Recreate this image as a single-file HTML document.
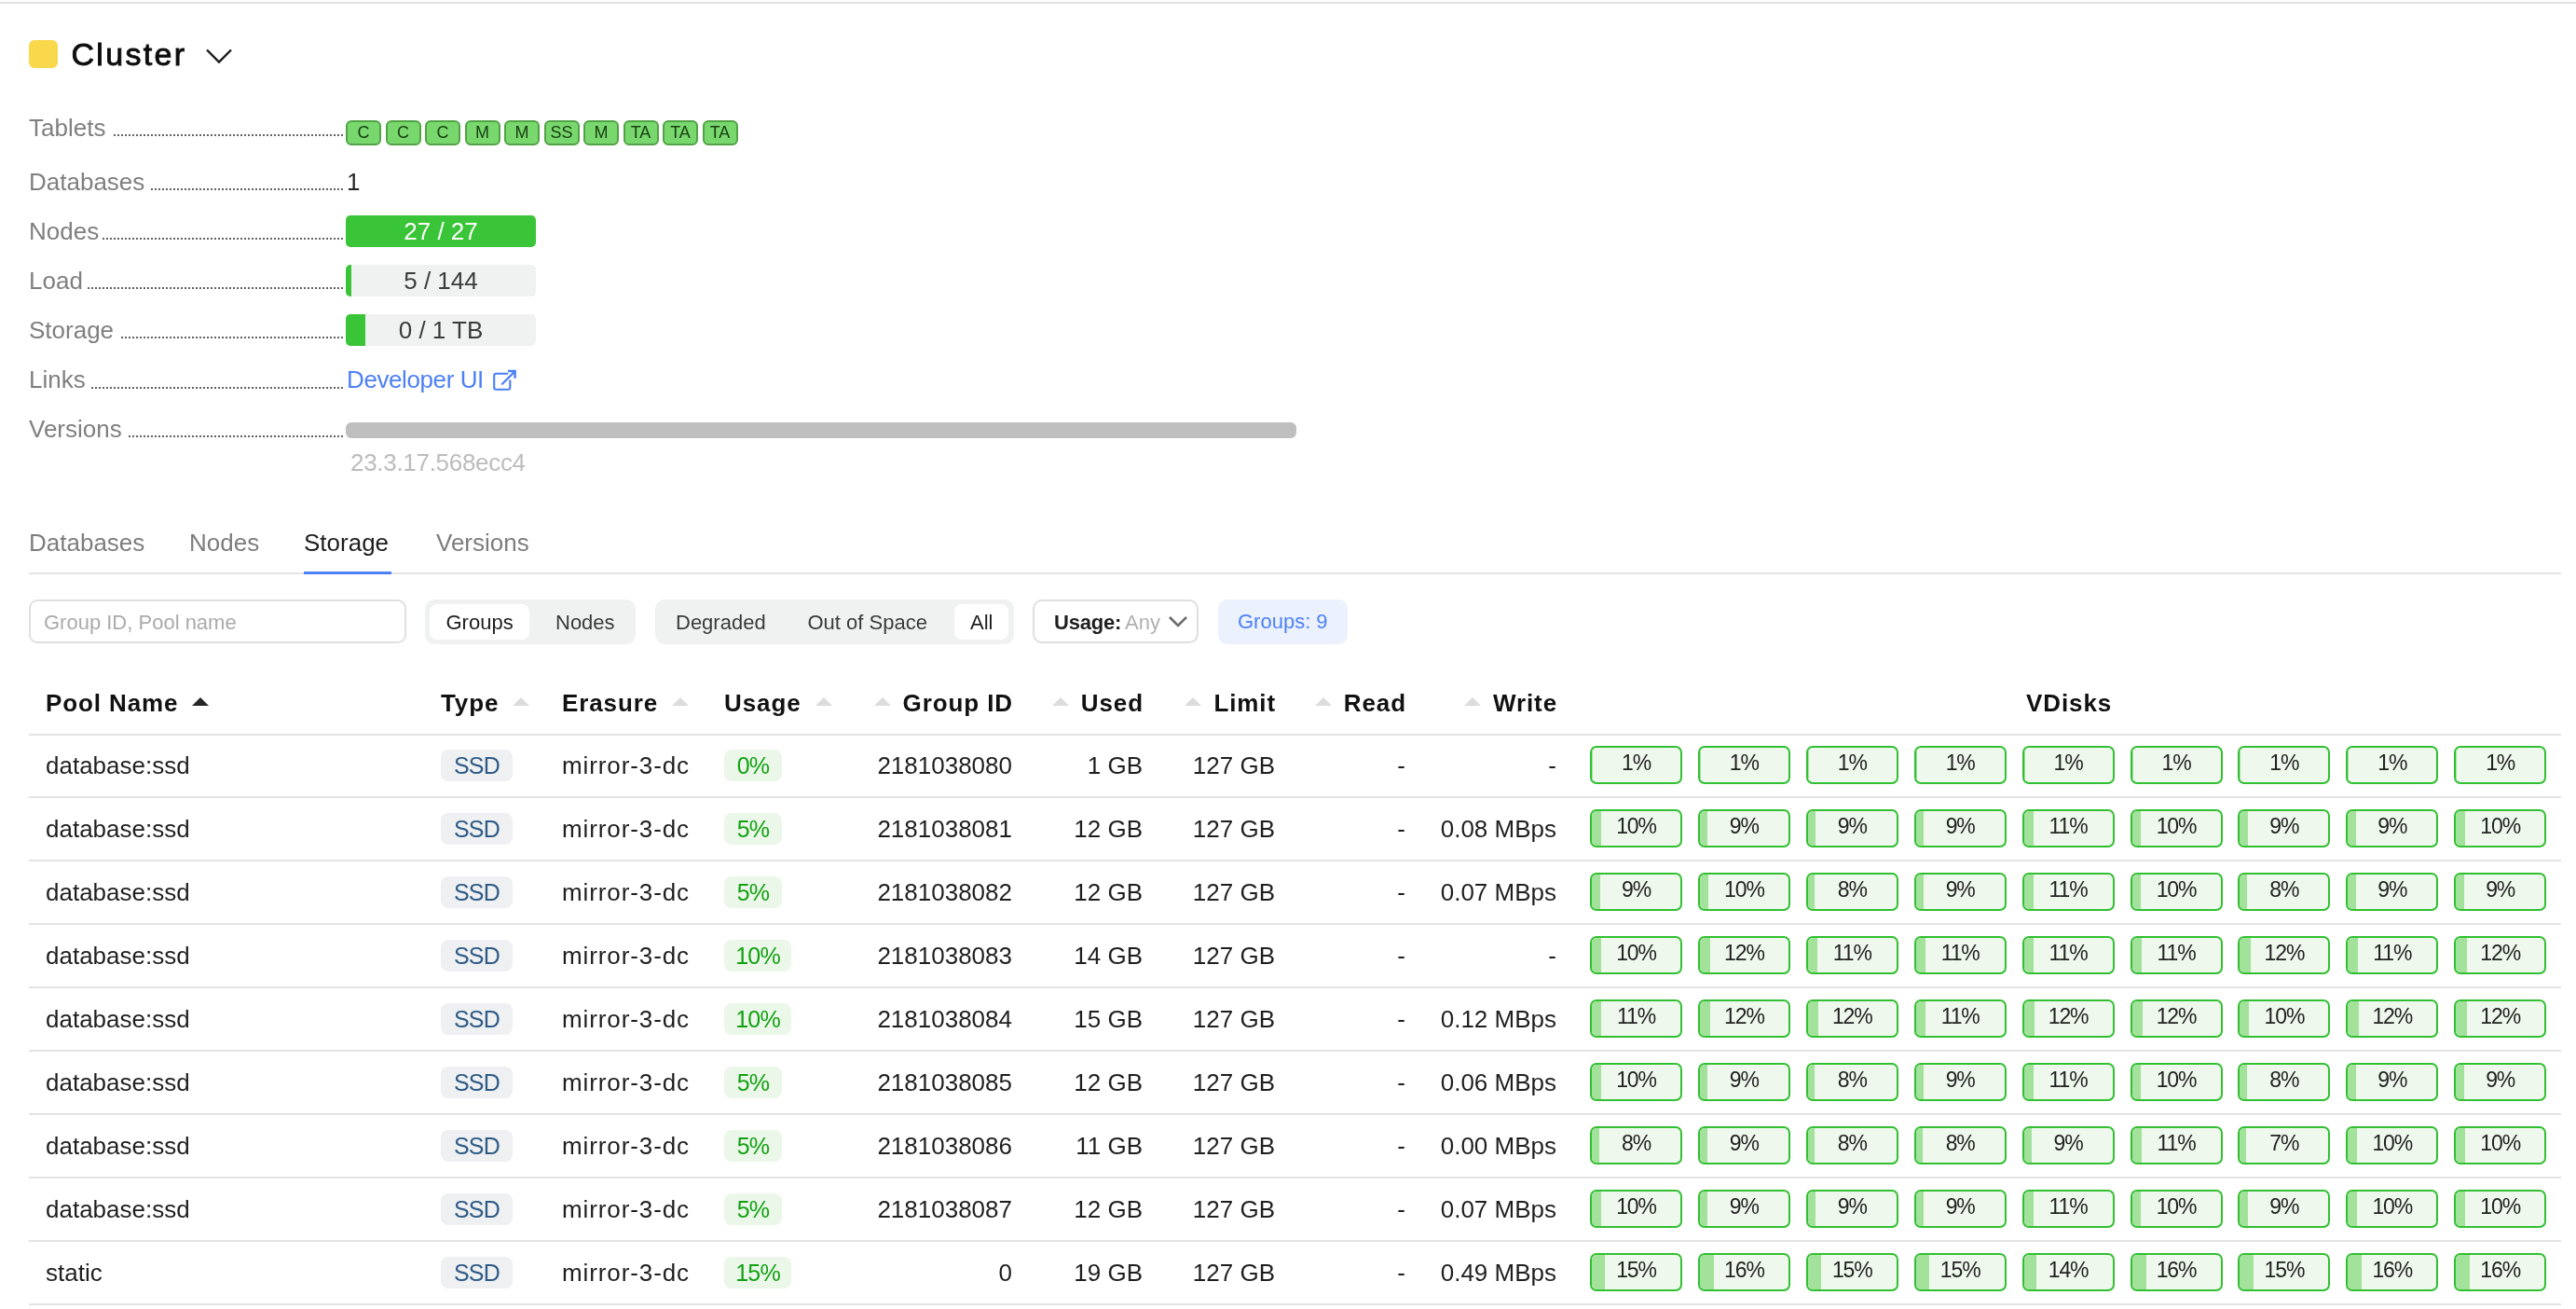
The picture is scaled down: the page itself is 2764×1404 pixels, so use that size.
<!DOCTYPE html>
<html><head><meta charset="utf-8">
<style>
html{background:#fff;}body{margin:0;padding:0;will-change:transform;}
body{width:2764px;height:1404px;position:relative;overflow:hidden;font-family:"Liberation Sans",sans-serif;color:#262626;}
.a{position:absolute;}
.t{position:absolute;white-space:nowrap;line-height:1.117;}
.lbl{font-size:26px;color:#7f7f7f;}
.dots{position:absolute;height:2px;background:repeating-linear-gradient(to left,#636363 0 2px,transparent 2px 4px);}
.tb{position:absolute;top:129px;width:34px;height:23px;border:2px solid #52a246;background:#78d86d;border-radius:6px;font-size:18px;line-height:23px;text-align:center;color:#183d12;}
.bar{position:absolute;left:371px;width:204px;height:34px;border-radius:5px;background:#f0f1f1;overflow:hidden;}
.bar .fill{position:absolute;left:0;top:0;bottom:0;background:#39c537;}
.bar .txt{position:absolute;left:0;right:0;top:0;font-size:26px;line-height:34px;text-align:center;color:#3b3b3b;}
.th{position:absolute;white-space:nowrap;line-height:1.117;font-size:26px;font-weight:bold;letter-spacing:0.9px;color:#111;display:flex;align-items:center;}
.th i{display:block;width:0;height:0;border-left:9px solid transparent;border-right:9px solid transparent;border-bottom:9px solid #dcdcdc;margin-left:15px;margin-top:-3px;}
.th i.l{margin-left:0;margin-right:13px;}
.td{font-size:26px;color:#1f1f1f;}
.hl{left:31px;width:2717px;height:2px;background:#e3e3e3;}
.ssd{position:absolute;width:77px;height:34px;border-radius:8px;background:#eef0f2;color:#2f5b86;font-size:25px;letter-spacing:-0.8px;line-height:34px;text-align:center;}
.use{position:absolute;height:34px;border-radius:8px;background:#ebf8e9;color:#12a012;font-size:25px;letter-spacing:-0.8px;line-height:34px;text-align:center;}
.vd{position:absolute;width:95px;height:37px;border:2px solid #32c032;border-radius:7px;background:#eef8ec;overflow:hidden;}
.vd b{position:absolute;left:0;top:0;bottom:0;background:#a2e29b;}
.vd span{position:absolute;left:0;right:0;top:-2px;line-height:37px;text-align:center;font-size:23px;letter-spacing:-1.1px;color:#222;}
</style></head><body>
<div class="a" style="left:0;top:2px;width:2764px;height:2px;background:#e2e2e2"></div>
<div class="a" style="left:31px;top:43px;width:31px;height:30px;border-radius:6px;background:#f9d84b"></div>
<div class="t" style="left:76.5px;top:40.2px;font-size:34px;letter-spacing:2.3px;-webkit-text-stroke:0.9px #0d0d0d;color:#0d0d0d">Cluster</div>
<svg class="a" style="left:219px;top:50px" width="32" height="20" viewBox="0 0 32 20"><path d="M3 3.5 L16 16.5 L29 3.5" fill="none" stroke="#1a1a1a" stroke-width="2.4"/></svg>

<!-- info rows -->
<div class="t lbl" style="left:31px;top:122.5px">Tablets</div>
<div class="dots" style="left:120px;width:248px;top:144px"></div>
<div class="t lbl" style="left:31px;top:180.5px">Databases</div>
<div class="dots" style="left:161px;width:207px;top:202px"></div>
<div class="t lbl" style="left:31px;top:233.5px">Nodes</div>
<div class="dots" style="left:110px;width:258px;top:255px"></div>
<div class="t lbl" style="left:31px;top:286.5px">Load</div>
<div class="dots" style="left:94px;width:274px;top:308px"></div>
<div class="t lbl" style="left:31px;top:339.5px">Storage</div>
<div class="dots" style="left:128px;width:240px;top:361px"></div>
<div class="t lbl" style="left:31px;top:393px">Links</div>
<div class="dots" style="left:97px;width:271px;top:415px"></div>
<div class="t lbl" style="left:31px;top:445.5px">Versions</div>
<div class="dots" style="left:136px;width:232px;top:467px"></div>

<div class="tb" style="left:371px">C</div>
<div class="tb" style="left:413.5px">C</div>
<div class="tb" style="left:456px">C</div>
<div class="tb" style="left:498.5px">M</div>
<div class="tb" style="left:541px">M</div>
<div class="tb" style="left:583.5px">SS</div>
<div class="tb" style="left:626px">M</div>
<div class="tb" style="left:668.5px">TA</div>
<div class="tb" style="left:711px">TA</div>
<div class="tb" style="left:753.5px">TA</div>

<div class="t" style="left:372px;top:180.5px;font-size:26px;color:#262626">1</div>

<div class="bar" style="top:231px;background:#39c537"><div class="txt" style="color:#fff">27 / 27</div></div>
<div class="bar" style="top:284px"><div class="fill" style="width:6px"></div><div class="txt">5 / 144</div></div>
<div class="bar" style="top:337px"><div class="fill" style="width:21px"></div><div class="txt">0 / 1 TB</div></div>

<div class="t" style="left:372px;top:393px;font-size:26px;color:#4d80f5;letter-spacing:-0.4px">Developer UI</div>
<svg class="a" style="left:520px;top:390px" width="45" height="35" viewBox="0 0 45 35"><path d="M24.4 10.8 H12.2 Q10.2 10.8 10.2 12.8 V25.7 Q10.2 27.7 12.2 27.7 H25.3 Q27.3 27.7 27.3 25.7 V18.2" fill="none" stroke="#4a7ff6" stroke-width="2.1" stroke-linecap="round"/><path d="M18.9 21.8 L32.2 8.6" fill="none" stroke="#4a7ff6" stroke-width="2.2" stroke-linecap="round"/><path d="M26.2 8 H32.6 V14.6" fill="none" stroke="#4a7ff6" stroke-width="2.4" stroke-linecap="square"/></svg>

<div class="a" style="left:371px;top:453px;width:1020px;height:17px;border-radius:6px;background:#bfbfbf"></div>
<div class="t" style="left:376px;top:482px;font-size:26px;color:#bcbcbc;letter-spacing:-0.3px">23.3.17.568ecc4</div>


<!-- tabs -->
<div class="t" style="left:31px;top:567.5px;font-size:26px;color:#7d7d7d">Databases</div>
<div class="t" style="left:203px;top:567.5px;font-size:26px;color:#7d7d7d">Nodes</div>
<div class="t" style="left:326px;top:567.5px;font-size:26px;color:#1d1d1d">Storage</div>
<div class="t" style="left:468px;top:567.5px;font-size:26px;color:#7d7d7d">Versions</div>
<div class="a" style="left:31px;top:614px;width:2717px;height:2px;background:#e4e4e4"></div>
<div class="a" style="left:326px;top:613px;width:94px;height:3px;background:#4f81f6"></div>

<!-- filters -->
<div class="a" style="left:31px;top:643px;width:405px;height:47px;box-sizing:border-box;border:2px solid #e0e0e0;border-radius:9px"></div>
<div class="t" style="left:47px;top:656.1px;font-size:22px;color:#ababab">Group ID, Pool name</div>

<div class="a" style="left:456px;top:643px;width:226px;height:48px;border-radius:10px;background:#f0f2f2"></div>
<div class="a" style="left:461px;top:648px;width:107px;height:38px;border-radius:8px;background:#fff"></div>
<div class="t" style="left:478.5px;top:656.1px;font-size:22px;color:#1e1e1e">Groups</div>
<div class="t" style="left:596px;top:656.1px;font-size:22px;color:#3a3a3a">Nodes</div>

<div class="a" style="left:703px;top:643px;width:385px;height:48px;border-radius:10px;background:#f0f2f2"></div>
<div class="a" style="left:1024px;top:648px;width:58px;height:38px;border-radius:8px;background:#fff"></div>
<div class="t" style="left:725px;top:656.1px;font-size:22px;color:#3a3a3a">Degraded</div>
<div class="t" style="left:866.5px;top:656.1px;font-size:22px;color:#3a3a3a">Out of Space</div>
<div class="t" style="left:1041px;top:656.1px;font-size:22px;color:#1e1e1e">All</div>

<div class="a" style="left:1108px;top:643px;width:178px;height:47px;box-sizing:border-box;border:2px solid #dedede;border-radius:10px"></div>
<div class="t" style="left:1131px;top:656.3px;font-size:22px;font-weight:bold;color:#1e1e1e;letter-spacing:-0.2px">Usage:</div>
<div class="t" style="left:1207px;top:656.3px;font-size:22px;color:#b0b0b0">Any</div>
<svg class="a" style="left:1252px;top:659px" width="24" height="16" viewBox="0 0 24 16"><path d="M3 3 L12 12 L21 3" fill="none" stroke="#6b6b6b" stroke-width="2.6"/></svg>

<div class="a" style="left:1307px;top:643px;width:139px;height:48px;border-radius:10px;background:#ebf1fd"></div>
<div class="t" style="left:1328px;top:654.7px;font-size:22px;color:#4f81f6">Groups: 9</div>

<!--TABLE-->
<!-- table -->
<div class="th" style="left:49px;top:739.5px"><span>Pool Name</span><i style="border-bottom-color:#262626"></i></div>
<div class="th" style="left:473px;top:739.5px"><span>Type</span><i style="border-bottom-color:#dcdcdc"></i></div>
<div class="th" style="left:603px;top:739.5px"><span>Erasure</span><i style="border-bottom-color:#dcdcdc"></i></div>
<div class="th" style="left:777px;top:739.5px"><span>Usage</span><i style="border-bottom-color:#dcdcdc"></i></div>
<div class="th" style="right:1677px;top:739.5px"><i class="l"></i><span>Group ID</span></div>
<div class="th" style="right:1537px;top:739.5px"><i class="l"></i><span>Used</span></div>
<div class="th" style="right:1395px;top:739.5px"><i class="l"></i><span>Limit</span></div>
<div class="th" style="right:1255px;top:739.5px"><i class="l"></i><span>Read</span></div>
<div class="th" style="right:1093px;top:739.5px"><i class="l"></i><span>Write</span></div>
<div class="th" style="left:2174px;top:739.5px"><span>VDisks</span></div>
<div class="a hl" style="top:787px"></div>
<div class="t td" style="left:49px;top:806.5px">database:ssd</div>
<div class="ssd" style="left:473px;top:804px">SSD</div>
<div class="t td" style="left:603px;top:806.5px;letter-spacing:0.9px">mirror-3-dc</div>
<div class="use" style="left:777px;top:804px;width:62px">0%</div>
<div class="t td" style="right:1678px;top:806.5px">2181038080</div>
<div class="t td" style="right:1538px;top:806.5px">1 GB</div>
<div class="t td" style="right:1396px;top:806.5px">127 GB</div>
<div class="t td" style="right:1256px;top:806.5px">-</div>
<div class="t td" style="right:1094px;top:806.5px">-</div>
<div class="vd" style="left:1706.0px;top:800px"><b style="width:0.9px"></b><span>1%</span></div>
<div class="vd" style="left:1821.9px;top:800px"><b style="width:0.9px"></b><span>1%</span></div>
<div class="vd" style="left:1937.8px;top:800px"><b style="width:0.9px"></b><span>1%</span></div>
<div class="vd" style="left:2053.7px;top:800px"><b style="width:0.9px"></b><span>1%</span></div>
<div class="vd" style="left:2169.6px;top:800px"><b style="width:0.9px"></b><span>1%</span></div>
<div class="vd" style="left:2285.5px;top:800px"><b style="width:0.9px"></b><span>1%</span></div>
<div class="vd" style="left:2401.4px;top:800px"><b style="width:0.9px"></b><span>1%</span></div>
<div class="vd" style="left:2517.3px;top:800px"><b style="width:0.9px"></b><span>1%</span></div>
<div class="vd" style="left:2633.2px;top:800px"><b style="width:0.9px"></b><span>1%</span></div>
<div class="a hl" style="top:854px"></div>
<div class="t td" style="left:49px;top:874.5px">database:ssd</div>
<div class="ssd" style="left:473px;top:872px">SSD</div>
<div class="t td" style="left:603px;top:874.5px;letter-spacing:0.9px">mirror-3-dc</div>
<div class="use" style="left:777px;top:872px;width:62px">5%</div>
<div class="t td" style="right:1678px;top:874.5px">2181038081</div>
<div class="t td" style="right:1538px;top:874.5px">12 GB</div>
<div class="t td" style="right:1396px;top:874.5px">127 GB</div>
<div class="t td" style="right:1256px;top:874.5px">-</div>
<div class="t td" style="right:1094px;top:874.5px">0.08 MBps</div>
<div class="vd" style="left:1706.0px;top:868px"><b style="width:9.5px"></b><span>10%</span></div>
<div class="vd" style="left:1821.9px;top:868px"><b style="width:8.6px"></b><span>9%</span></div>
<div class="vd" style="left:1937.8px;top:868px"><b style="width:8.6px"></b><span>9%</span></div>
<div class="vd" style="left:2053.7px;top:868px"><b style="width:8.6px"></b><span>9%</span></div>
<div class="vd" style="left:2169.6px;top:868px"><b style="width:10.4px"></b><span>11%</span></div>
<div class="vd" style="left:2285.5px;top:868px"><b style="width:9.5px"></b><span>10%</span></div>
<div class="vd" style="left:2401.4px;top:868px"><b style="width:8.6px"></b><span>9%</span></div>
<div class="vd" style="left:2517.3px;top:868px"><b style="width:8.6px"></b><span>9%</span></div>
<div class="vd" style="left:2633.2px;top:868px"><b style="width:9.5px"></b><span>10%</span></div>
<div class="a hl" style="top:922px"></div>
<div class="t td" style="left:49px;top:942.5px">database:ssd</div>
<div class="ssd" style="left:473px;top:940px">SSD</div>
<div class="t td" style="left:603px;top:942.5px;letter-spacing:0.9px">mirror-3-dc</div>
<div class="use" style="left:777px;top:940px;width:62px">5%</div>
<div class="t td" style="right:1678px;top:942.5px">2181038082</div>
<div class="t td" style="right:1538px;top:942.5px">12 GB</div>
<div class="t td" style="right:1396px;top:942.5px">127 GB</div>
<div class="t td" style="right:1256px;top:942.5px">-</div>
<div class="t td" style="right:1094px;top:942.5px">0.07 MBps</div>
<div class="vd" style="left:1706.0px;top:936px"><b style="width:8.6px"></b><span>9%</span></div>
<div class="vd" style="left:1821.9px;top:936px"><b style="width:9.5px"></b><span>10%</span></div>
<div class="vd" style="left:1937.8px;top:936px"><b style="width:7.6px"></b><span>8%</span></div>
<div class="vd" style="left:2053.7px;top:936px"><b style="width:8.6px"></b><span>9%</span></div>
<div class="vd" style="left:2169.6px;top:936px"><b style="width:10.4px"></b><span>11%</span></div>
<div class="vd" style="left:2285.5px;top:936px"><b style="width:9.5px"></b><span>10%</span></div>
<div class="vd" style="left:2401.4px;top:936px"><b style="width:7.6px"></b><span>8%</span></div>
<div class="vd" style="left:2517.3px;top:936px"><b style="width:8.6px"></b><span>9%</span></div>
<div class="vd" style="left:2633.2px;top:936px"><b style="width:8.6px"></b><span>9%</span></div>
<div class="a hl" style="top:990px"></div>
<div class="t td" style="left:49px;top:1010.5px">database:ssd</div>
<div class="ssd" style="left:473px;top:1008px">SSD</div>
<div class="t td" style="left:603px;top:1010.5px;letter-spacing:0.9px">mirror-3-dc</div>
<div class="use" style="left:777px;top:1008px;width:72px">10%</div>
<div class="t td" style="right:1678px;top:1010.5px">2181038083</div>
<div class="t td" style="right:1538px;top:1010.5px">14 GB</div>
<div class="t td" style="right:1396px;top:1010.5px">127 GB</div>
<div class="t td" style="right:1256px;top:1010.5px">-</div>
<div class="t td" style="right:1094px;top:1010.5px">-</div>
<div class="vd" style="left:1706.0px;top:1004px"><b style="width:9.5px"></b><span>10%</span></div>
<div class="vd" style="left:1821.9px;top:1004px"><b style="width:11.4px"></b><span>12%</span></div>
<div class="vd" style="left:1937.8px;top:1004px"><b style="width:10.4px"></b><span>11%</span></div>
<div class="vd" style="left:2053.7px;top:1004px"><b style="width:10.4px"></b><span>11%</span></div>
<div class="vd" style="left:2169.6px;top:1004px"><b style="width:10.4px"></b><span>11%</span></div>
<div class="vd" style="left:2285.5px;top:1004px"><b style="width:10.4px"></b><span>11%</span></div>
<div class="vd" style="left:2401.4px;top:1004px"><b style="width:11.4px"></b><span>12%</span></div>
<div class="vd" style="left:2517.3px;top:1004px"><b style="width:10.4px"></b><span>11%</span></div>
<div class="vd" style="left:2633.2px;top:1004px"><b style="width:11.4px"></b><span>12%</span></div>
<div class="a hl" style="top:1058px"></div>
<div class="t td" style="left:49px;top:1078.5px">database:ssd</div>
<div class="ssd" style="left:473px;top:1076px">SSD</div>
<div class="t td" style="left:603px;top:1078.5px;letter-spacing:0.9px">mirror-3-dc</div>
<div class="use" style="left:777px;top:1076px;width:72px">10%</div>
<div class="t td" style="right:1678px;top:1078.5px">2181038084</div>
<div class="t td" style="right:1538px;top:1078.5px">15 GB</div>
<div class="t td" style="right:1396px;top:1078.5px">127 GB</div>
<div class="t td" style="right:1256px;top:1078.5px">-</div>
<div class="t td" style="right:1094px;top:1078.5px">0.12 MBps</div>
<div class="vd" style="left:1706.0px;top:1072px"><b style="width:10.4px"></b><span>11%</span></div>
<div class="vd" style="left:1821.9px;top:1072px"><b style="width:11.4px"></b><span>12%</span></div>
<div class="vd" style="left:1937.8px;top:1072px"><b style="width:11.4px"></b><span>12%</span></div>
<div class="vd" style="left:2053.7px;top:1072px"><b style="width:10.4px"></b><span>11%</span></div>
<div class="vd" style="left:2169.6px;top:1072px"><b style="width:11.4px"></b><span>12%</span></div>
<div class="vd" style="left:2285.5px;top:1072px"><b style="width:11.4px"></b><span>12%</span></div>
<div class="vd" style="left:2401.4px;top:1072px"><b style="width:9.5px"></b><span>10%</span></div>
<div class="vd" style="left:2517.3px;top:1072px"><b style="width:11.4px"></b><span>12%</span></div>
<div class="vd" style="left:2633.2px;top:1072px"><b style="width:11.4px"></b><span>12%</span></div>
<div class="a hl" style="top:1126px"></div>
<div class="t td" style="left:49px;top:1146.5px">database:ssd</div>
<div class="ssd" style="left:473px;top:1144px">SSD</div>
<div class="t td" style="left:603px;top:1146.5px;letter-spacing:0.9px">mirror-3-dc</div>
<div class="use" style="left:777px;top:1144px;width:62px">5%</div>
<div class="t td" style="right:1678px;top:1146.5px">2181038085</div>
<div class="t td" style="right:1538px;top:1146.5px">12 GB</div>
<div class="t td" style="right:1396px;top:1146.5px">127 GB</div>
<div class="t td" style="right:1256px;top:1146.5px">-</div>
<div class="t td" style="right:1094px;top:1146.5px">0.06 MBps</div>
<div class="vd" style="left:1706.0px;top:1140px"><b style="width:9.5px"></b><span>10%</span></div>
<div class="vd" style="left:1821.9px;top:1140px"><b style="width:8.6px"></b><span>9%</span></div>
<div class="vd" style="left:1937.8px;top:1140px"><b style="width:7.6px"></b><span>8%</span></div>
<div class="vd" style="left:2053.7px;top:1140px"><b style="width:8.6px"></b><span>9%</span></div>
<div class="vd" style="left:2169.6px;top:1140px"><b style="width:10.4px"></b><span>11%</span></div>
<div class="vd" style="left:2285.5px;top:1140px"><b style="width:9.5px"></b><span>10%</span></div>
<div class="vd" style="left:2401.4px;top:1140px"><b style="width:7.6px"></b><span>8%</span></div>
<div class="vd" style="left:2517.3px;top:1140px"><b style="width:8.6px"></b><span>9%</span></div>
<div class="vd" style="left:2633.2px;top:1140px"><b style="width:8.6px"></b><span>9%</span></div>
<div class="a hl" style="top:1194px"></div>
<div class="t td" style="left:49px;top:1214.5px">database:ssd</div>
<div class="ssd" style="left:473px;top:1212px">SSD</div>
<div class="t td" style="left:603px;top:1214.5px;letter-spacing:0.9px">mirror-3-dc</div>
<div class="use" style="left:777px;top:1212px;width:62px">5%</div>
<div class="t td" style="right:1678px;top:1214.5px">2181038086</div>
<div class="t td" style="right:1538px;top:1214.5px">11 GB</div>
<div class="t td" style="right:1396px;top:1214.5px">127 GB</div>
<div class="t td" style="right:1256px;top:1214.5px">-</div>
<div class="t td" style="right:1094px;top:1214.5px">0.00 MBps</div>
<div class="vd" style="left:1706.0px;top:1208px"><b style="width:7.6px"></b><span>8%</span></div>
<div class="vd" style="left:1821.9px;top:1208px"><b style="width:8.6px"></b><span>9%</span></div>
<div class="vd" style="left:1937.8px;top:1208px"><b style="width:7.6px"></b><span>8%</span></div>
<div class="vd" style="left:2053.7px;top:1208px"><b style="width:7.6px"></b><span>8%</span></div>
<div class="vd" style="left:2169.6px;top:1208px"><b style="width:8.6px"></b><span>9%</span></div>
<div class="vd" style="left:2285.5px;top:1208px"><b style="width:10.4px"></b><span>11%</span></div>
<div class="vd" style="left:2401.4px;top:1208px"><b style="width:6.7px"></b><span>7%</span></div>
<div class="vd" style="left:2517.3px;top:1208px"><b style="width:9.5px"></b><span>10%</span></div>
<div class="vd" style="left:2633.2px;top:1208px"><b style="width:9.5px"></b><span>10%</span></div>
<div class="a hl" style="top:1262px"></div>
<div class="t td" style="left:49px;top:1282.5px">database:ssd</div>
<div class="ssd" style="left:473px;top:1280px">SSD</div>
<div class="t td" style="left:603px;top:1282.5px;letter-spacing:0.9px">mirror-3-dc</div>
<div class="use" style="left:777px;top:1280px;width:62px">5%</div>
<div class="t td" style="right:1678px;top:1282.5px">2181038087</div>
<div class="t td" style="right:1538px;top:1282.5px">12 GB</div>
<div class="t td" style="right:1396px;top:1282.5px">127 GB</div>
<div class="t td" style="right:1256px;top:1282.5px">-</div>
<div class="t td" style="right:1094px;top:1282.5px">0.07 MBps</div>
<div class="vd" style="left:1706.0px;top:1276px"><b style="width:9.5px"></b><span>10%</span></div>
<div class="vd" style="left:1821.9px;top:1276px"><b style="width:8.6px"></b><span>9%</span></div>
<div class="vd" style="left:1937.8px;top:1276px"><b style="width:8.6px"></b><span>9%</span></div>
<div class="vd" style="left:2053.7px;top:1276px"><b style="width:8.6px"></b><span>9%</span></div>
<div class="vd" style="left:2169.6px;top:1276px"><b style="width:10.4px"></b><span>11%</span></div>
<div class="vd" style="left:2285.5px;top:1276px"><b style="width:9.5px"></b><span>10%</span></div>
<div class="vd" style="left:2401.4px;top:1276px"><b style="width:8.6px"></b><span>9%</span></div>
<div class="vd" style="left:2517.3px;top:1276px"><b style="width:9.5px"></b><span>10%</span></div>
<div class="vd" style="left:2633.2px;top:1276px"><b style="width:9.5px"></b><span>10%</span></div>
<div class="a hl" style="top:1330px"></div>
<div class="t td" style="left:49px;top:1350.5px">static</div>
<div class="ssd" style="left:473px;top:1348px">SSD</div>
<div class="t td" style="left:603px;top:1350.5px;letter-spacing:0.9px">mirror-3-dc</div>
<div class="use" style="left:777px;top:1348px;width:72px">15%</div>
<div class="t td" style="right:1678px;top:1350.5px">0</div>
<div class="t td" style="right:1538px;top:1350.5px">19 GB</div>
<div class="t td" style="right:1396px;top:1350.5px">127 GB</div>
<div class="t td" style="right:1256px;top:1350.5px">-</div>
<div class="t td" style="right:1094px;top:1350.5px">0.49 MBps</div>
<div class="vd" style="left:1706.0px;top:1344px"><b style="width:14.2px"></b><span>15%</span></div>
<div class="vd" style="left:1821.9px;top:1344px"><b style="width:15.2px"></b><span>16%</span></div>
<div class="vd" style="left:1937.8px;top:1344px"><b style="width:14.2px"></b><span>15%</span></div>
<div class="vd" style="left:2053.7px;top:1344px"><b style="width:14.2px"></b><span>15%</span></div>
<div class="vd" style="left:2169.6px;top:1344px"><b style="width:13.3px"></b><span>14%</span></div>
<div class="vd" style="left:2285.5px;top:1344px"><b style="width:15.2px"></b><span>16%</span></div>
<div class="vd" style="left:2401.4px;top:1344px"><b style="width:14.2px"></b><span>15%</span></div>
<div class="vd" style="left:2517.3px;top:1344px"><b style="width:15.2px"></b><span>16%</span></div>
<div class="vd" style="left:2633.2px;top:1344px"><b style="width:15.2px"></b><span>16%</span></div>
<div class="a hl" style="top:1398px"></div>
<!--/TABLE-->
</body></html>
